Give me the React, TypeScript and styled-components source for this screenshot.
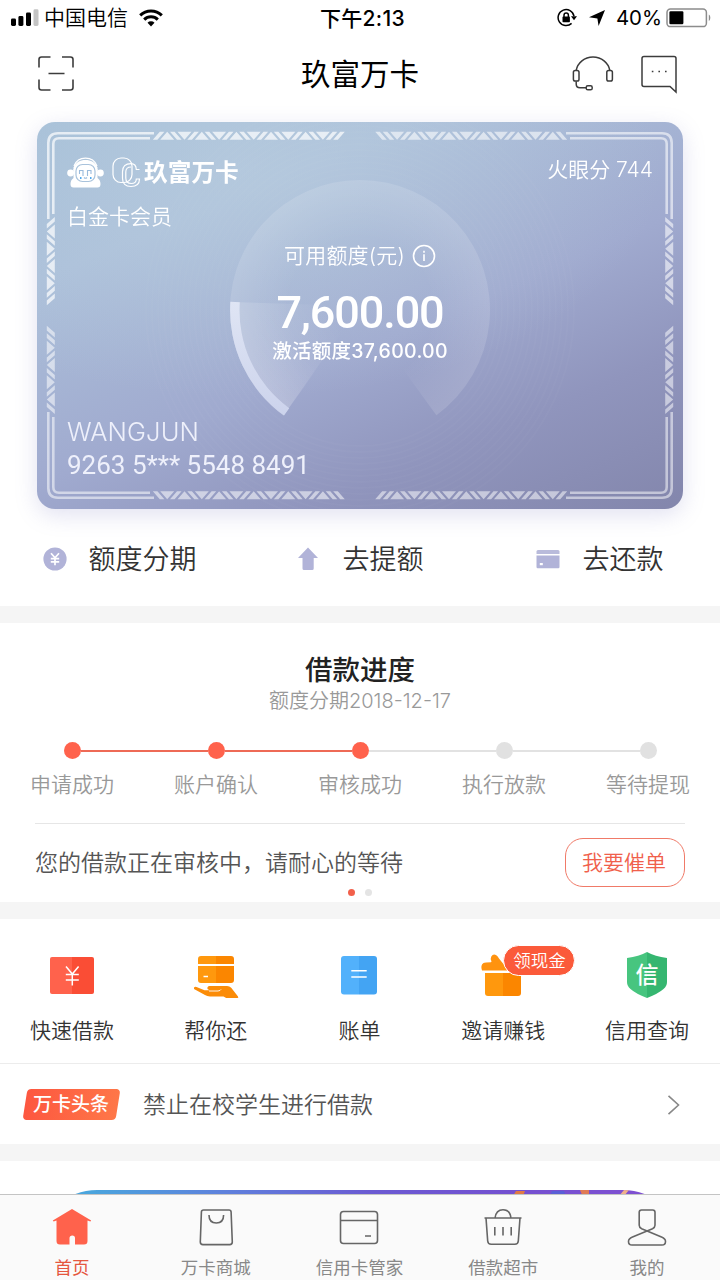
import React from "react";
import styled, { createGlobalStyle } from "styled-components";

const SANS = `Inter, "Noto Sans CJK SC", sans-serif`;
const DIN = `Roboto, "Noto Sans CJK SC", sans-serif`;
const ACCENT = "#ff624c";

const GlobalStyle = createGlobalStyle`
  * { box-sizing: border-box; }
  body { margin: 0; background: #fff; font-family: ${SANS}; }
  svg { display: block; flex: none; }
`;

const Screen = styled.div`
  width: 720px;
  height: 1280px;
  display: flex;
  flex-direction: column;
  overflow: hidden;
  background: #fff;
`;

const Label = styled.span<{
  $size: number;
  $color?: string;
  $weight?: number;
  $track?: number;
  $font?: string;
  $line?: number;
}>`
  font-family: ${(p) => p.$font ?? SANS};
  font-size: ${(p) => p.$size}px;
  line-height: ${(p) => p.$line ?? 28}px;
  color: ${(p) => p.$color ?? "#333"};
  font-weight: ${(p) => p.$weight ?? 400};
  letter-spacing: ${(p) => p.$track ?? 0}px;
  white-space: nowrap;
`;

/* ---------- status bar ---------- */

const StatusBar = styled.header`
  height: 36px;
  flex: none;
  display: grid;
  grid-template-columns: 1fr auto 1fr;
  align-items: center;
  padding: 0 9px 0 11px;
`;

const StatusSide = styled.div<{ $end?: boolean }>`
  display: flex;
  align-items: center;
  justify-content: ${(p) => (p.$end ? "flex-end" : "flex-start")};
`;

const Clock = styled.div`
  display: flex;
  padding: 1px 0 0 3px;
`;

const Gap = styled.i<{ $w: number }>`
  flex: none;
  width: ${(p) => p.$w}px;
`;

const SignalIcon = () => (
  <svg width="28" height="18" viewBox="11 9 28 18">
    <rect x="11" y="18.5" width="5" height="7.5" rx="1.4" />
    <rect x="18.4" y="16" width="5" height="10" rx="1.4" />
    <rect x="26" y="12.6" width="5" height="13.4" rx="1.4" />
    <rect x="33.5" y="9.3" width="5" height="16.7" rx="1.4" fill="#c4c4c4" />
  </svg>
);

const WifiIcon = () => (
  <svg width="24" height="18" viewBox="0 0 24 18" fill="none" stroke="#000" strokeWidth="3">
    <path d="M1.2 6.4a15.4 15.4 0 0 1 21.6 0" />
    <path d="M5.2 10.6a9.6 9.6 0 0 1 13.6 0" />
    <path d="M12 17.4l-3.5-3.6a5 5 0 0 1 7 0z" fill="#000" stroke="none" />
  </svg>
);

const LockIcon = () => (
  <svg width="20" height="20" viewBox="0 0 20 20" fill="none" stroke="#000" strokeWidth="1.5">
    <path d="M14.6 15.4A8 8 0 1 1 17 8.2" />
    <path d="M14 8.2h6l-3 4z" fill="#000" stroke="none" />
    <rect x="5.5" y="8.6" width="7.4" height="5.6" rx=".8" fill="#000" stroke="none" />
    <path d="M7 9V7.2a2.2 2.2 0 0 1 4.4 0V9" />
  </svg>
);

const LocationIcon = () => (
  <svg width="16" height="16" viewBox="0 0 16 16">
    <path d="M16 0L9.6 16 8.4 8.4 0 7.2z" />
  </svg>
);

const BatteryIcon = () => (
  <svg width="45" height="20" viewBox="0 0 45 20">
    <rect x="1" y="1" width="39.4" height="17.6" rx="3.4" fill="#fff" stroke="#8c8c8c" strokeWidth="1.5" />
    <rect x="3.4" y="3.3" width="14" height="13" rx="1.2" />
    <path d="M42.8 6.6c2 .8 2 5.600 0 6.400z" fill="#8c8c8c" />
  </svg>
);

/* ---------- title bar ---------- */

const TitleBar = styled.nav`
  height: 76px;
  flex: none;
  display: grid;
  grid-template-columns: 1fr auto 1fr;
  align-items: center;
  padding: 0 37px;
`;

const TitleActions = styled.div`
  display: flex;
  justify-content: flex-end;
  gap: 27px;
  padding-right: 5px;
`;

const ScanIcon = () => (
  <svg width="38" height="38" viewBox="0 0 38 38" fill="none" stroke="#3c3c3c" strokeWidth="1.6">
    <path d="M2 12.500V4.500a2.500 2.500 0 0 1 2.500-2.500h9M25 2h8.500A2.500 2.500 0 0 1 36 4.500v8M36 24.500v8a2.500 2.500 0 0 1-2.500 2.500H25M13.500 35h-9A2.500 2.500 0 0 1 2 32.500v-8M11.500 18.500h16" />
  </svg>
);

const HeadsetIcon = () => (
  <svg width="42" height="38" viewBox="572 55 42 38" fill="none" stroke="#3c3c3c" strokeWidth="1.5">
    <path d="M576.200 71.400a17 15.800 0 0 1 33.600 0" />
    <rect x="573.400" y="71.500" width="5.600" height="10.600" rx="1.800" />
    <rect x="606.800" y="71.500" width="5.600" height="10.600" rx="1.800" />
    <path d="M576.200 82.200v2.800q0 3.800 3.800 3.800h6" />
    <rect x="586.200" y="86.800" width="6" height="4" rx="1.600" />
  </svg>
);

const ChatIcon = () => (
  <svg width="37" height="40" viewBox="641 54 37 40" fill="none" stroke="#3c3c3c" strokeWidth="1.500">
    <path d="M644 56.500h30a2 2 0 0 1 2 2v33.600l-6-5.700h-26a2 2 0 0 1-2-2v-25.900a2 2 0 0 1 2-2z" />
    <path d="M651.800 71.500h1.600M658.400 71.500h1.600M665 71.500h1.600" />
  </svg>
);

/* ---------- membership card ---------- */

const CardArea = styled.section`
  flex: none;
  padding: 10px 37px 0;
`;

const Card = styled.div`
  position: relative;
  height: 387px;
  border-radius: 18px;
  overflow: hidden;
  background: radial-gradient(ellipse 420px 230px at 32% 12%, rgba(190, 210, 226, 0.5), rgba(190, 210, 226, 0) 100%),
    linear-gradient(157deg, #a3bdd6 0%, #abbfd9 24%, #a0aacf 55%, #9095bd 76%, #8386ac 100%);
`;

const CardShadow = styled.div`
  border-radius: 18px;
  box-shadow: 0 6px 22px rgba(120, 120, 190, 0.22);
`;

const CardArt = styled.svg`
  position: absolute;
  inset: 0;
`;

const CardBody = styled.div`
  position: relative;
  height: 100%;
  padding: 32px 30px 0;
  display: flex;
  flex-direction: column;
`;

const CardHeader = styled.div`
  height: 36px;
  display: flex;
  align-items: center;
`;

const BrandName = styled.div`
  display: flex;
  padding-top: 2px;
`;

const ScoreSlot = styled.div`
  margin-left: auto;
  padding-bottom: 4px;
`;

const CardRow = styled.div<{ $top: number; $height: number; $center?: boolean }>`
  margin-top: ${(p) => p.$top}px;
  height: ${(p) => p.$height}px;
  display: flex;
  align-items: center;
  justify-content: ${(p) => (p.$center ? "center" : "flex-start")};
`;

const BAR = 4.6;
const SLANT = 7;
const SPACE = 2.8;
const STRIDE = BAR + SLANT + SPACE * 2 + 0.1;

/* One braided strip, 8 units tall: triangles pointing up and down in turn,
   a slanted bar between each two, and a double bar at the far end. */
const Braid = ({ triangles }: { triangles: number }) => {
  const rising = (x: number) => `M${x} 8h${BAR}l${SLANT}-8h-${BAR}z`;
  const falling = (x: number) => `M${x} 0h${BAR}l${SLANT} 8h-${BAR}z`;
  const parts = [rising(0)];
  for (let i = 0; i < triangles; i++) {
    const left = BAR + SPACE + i * STRIDE;
    const after = left + SLANT + SPACE;
    if (i % 2 === 0) {
      parts.push(`M${left} 8l${SLANT}-8 ${SLANT} 8z`, falling(after));
    } else {
      parts.push(`M${left} 0l${SLANT} 8 ${SLANT}-8z`, rising(after));
    }
  }
  parts.push(rising(triangles * STRIDE + BAR + SPACE));
  return <path d={parts.join("")} />;
};

/* A quarter of the card frame; mirrored for the other three corners. */
const FrameQuarter = ({ transform, opacity }: { transform: string; opacity: number }) => (
  <g transform={transform} opacity={opacity}>
    <g fill="none" stroke="#fff">
      <path d="M11.300 97V21q0-9.700 9.700-9.700h96" strokeWidth="2.600" />
      <path d="M16.300 92V22q0-5.700 5.700-5.700h91" strokeWidth="2.600" />
    </g>
    <g fill="#fff">
      <g transform="translate(115.800 9.800)">
        <Braid triangles={10} />
      </g>
      <g transform="translate(9.800 95) matrix(0 1 1 0 0 0)">
        <Braid triangles={4} />
      </g>
    </g>
  </g>
);

const ripples = Array.from({ length: 14 }, (_, i) => 136 + i * 6);

const CardBackground = () => (
  <CardArt width="646" height="387" viewBox="0 0 646 387">
    <defs>
      <radialGradient id="discFade" gradientUnits="userSpaceOnUse" cx="323" cy="188" r="130">
        <stop offset=".55" stopColor="#fff" stopOpacity="0" />
        <stop offset="1" stopColor="#fff" stopOpacity=".13" />
      </radialGradient>
      <linearGradient id="wedge" gradientUnits="userSpaceOnUse" x1="200" y1="240" x2="300" y2="195">
        <stop offset="0" stopColor="#fff" stopOpacity=".2" />
        <stop offset="1" stopColor="#fff" stopOpacity="0" />
      </linearGradient>
      <linearGradient id="ring" x1="0" y1="0" x2="0" y2="1">
        <stop offset="0" stopColor="#dfe5f4" />
        <stop offset="1" stopColor="#ccd3ec" />
      </linearGradient>
    </defs>
    <g fill="none" stroke="#fff" strokeOpacity=".025" strokeWidth="2">
      {ripples.map((r) => (
        <circle key={r} cx="323" cy="188" r={r} />
      ))}
    </g>
    <path d="M323 188L246.600 293.200A130 130 0 1 1 399.400 293.200z" fill="url(#discFade)" />
    <path d="M323 184L193.400 180A130 130 0 0 0 246.600 293.500z" fill="url(#wedge)" />
    <path d="M193.400 179.800A130 130 0 0 0 247 293.600L252.200 286.200A121 121 0 0 1 202.800 180.300z" fill="url(#ring)" />
    <FrameQuarter transform="" opacity={0.7} />
    <FrameQuarter transform="translate(646 0) scale(-1 1)" opacity={0.58} />
    <FrameQuarter transform="translate(0 387) scale(1 -1)" opacity={0.54} />
    <FrameQuarter transform="translate(646 387) scale(-1 -1)" opacity={0.52} />
  </CardArt>
);

const MascotIcon = () => (
  <svg width="37" height="31" viewBox="0 0 37 31">
    <path d="M7 9C9 4 13 1.200 18.500 1.200S28 4 30 9" fill="none" stroke="#fff" strokeWidth="1.300" />
    <path d="M6.500 10.500C9 5 13 3 18.500 3S28 5 30.500 10.500V16H6.500z" fill="#fff" />
    <circle cx="3.600" cy="16" r="3.400" fill="#fff" />
    <circle cx="33.400" cy="16" r="3.400" fill="#fff" />
    <path d="M6.500 12h24v9q3 2 3 6 0 3.500-3 3.500h-24q-3 0-3-3.500 0-4 3-6z" fill="#fff" />
    <rect x="9" y="7.500" width="19" height="17" rx="6.500" fill="#fff" stroke="#a9c3dc" strokeWidth="1.200" />
    <path d="M12.500 17v-3.500h3.500V19M20.500 19v-5.500H24V17M17 20.500q1.500 1.500 3 0" fill="none" stroke="#9bbbdc" strokeWidth="1.100" />
    <path d="M13 21h1.500M23 21h1.500" stroke="#4fa8ee" strokeWidth="1.800" />
  </svg>
);

const BrandMark = () => (
  <svg width="29" height="31" viewBox="0 0 29 31" fill="none" stroke="#fff" strokeWidth="1.200">
    <rect x="1" y="1" width="19" height="24.500" rx="8" />
    <path d="M27.500 12.500h-3.200q-.3-5.800-5.300-5.800-8.500 0-8.500 8v6.500q0 8.300 8.500 8.300 8.500 0 8.500-7.500h-3.200q0 4.500-5 4.500-5.500 0-5.500-5.500v-6q0-5 5.200-5" />
  </svg>
);

const InfoIcon = () => (
  <svg width="24" height="24" viewBox="0 0 24 24" fill="none" stroke="#fff" strokeWidth="1.600">
    <circle cx="12" cy="12" r="10.500" />
    <path d="M12 10.300v6.700M12 6.800v1.900" />
  </svg>
);

/* ---------- quick actions ---------- */

const QuickRow = styled.div`
  height: 97px;
  flex: none;
  display: flex;
  align-items: center;
  padding: 3px 0 0 42.500px;
`;

const QuickItem = styled.div<{ $gap: number; $before?: number }>`
  display: flex;
  align-items: center;
  gap: ${(p) => p.$gap}px;
  margin-left: ${(p) => p.$before ?? 0}px;
  & > span { padding-top: 2px; }
`;

const CoinIcon = () => (
  <svg width="24" height="24" viewBox="0 0 24 24">
    <circle cx="12" cy="12" r="11.600" fill="#b1b3d8" />
    <path d="M8 6.200l4 4.600 4-4.600M12 10.800v7.400M7.800 11.600h8.400M7.800 14.800h8.400" fill="none" stroke="#fff" strokeWidth="1.700" />
  </svg>
);

const UpIcon = () => (
  <svg width="20" height="24" viewBox="0 0 20 24">
    <path d="M10 .5L20 11h-4.300v10.500q0 1.500-1.500 1.500H6q-1.500 0-1.500-1.500V11H0z" fill="#b1b3d8" />
  </svg>
);

const PayCardIcon = () => (
  <svg width="24" height="20" viewBox="0 0 24 20">
    <path d="M2 1h20q1.500 0 1.500 1.500V5H.5V2.500Q.5 1 2 1z" fill="#b9bbdb" />
    <path d="M.5 6.600h23V18q0 1.200-1.200 1.200H1.700Q.5 19.200.5 18z" fill="#b1b3d8" />
    <rect x="3.800" y="14" width="3" height="2.200" fill="#fff" />
  </svg>
);

const Band = styled.div<{ $h: number }>`
  height: ${(p) => p.$h}px;
  flex: none;
  background: #f5f5f5;
`;

/* ---------- loan progress ---------- */

const Progress = styled.section`
  height: 279px;
  flex: none;
  display: flex;
  flex-direction: column;
  align-items: center;
  padding-top: 31px;
`;

const Steps = styled.div`
  width: 720px;
  margin-top: 26px;
  display: grid;
  grid-template-columns: repeat(5, 144px);
`;

const Step = styled.div`
  display: flex;
  flex-direction: column;
  align-items: center;
  gap: 12px;
`;

const Track = styled.div`
  width: 100%;
  display: flex;
  align-items: center;
`;

const Rail = styled.i<{ $tone: "on" | "off" | "none" }>`
  flex: 1;
  height: 2px;
  background: ${(p) => (p.$tone === "on" ? "#ee6a56" : p.$tone === "off" ? "#e2e2e2" : "transparent")};
`;

const Dot = styled.i<{ $on: boolean }>`
  width: 17px;
  height: 17px;
  border-radius: 50%;
  background: ${(p) => (p.$on ? ACCENT : "#e1e1e1")};
`;

const Notice = styled.div`
  width: 650px;
  height: 64px;
  margin-top: 24px;
  padding-top: 14px;
  border-top: 1px solid #e6e6e6;
  display: flex;
  align-items: center;
  justify-content: space-between;
`;

const UrgeButton = styled.button`
  width: 120px;
  height: 49px;
  padding: 0 2px 0 0;
  background: #fff;
  border: 1.500px solid #f07a68;
  border-radius: 18px;
`;

const Pager = styled.div`
  display: flex;
  align-items: center;
  gap: 10px;
  margin-top: 2px;
`;

const PagerDot = styled.i<{ $on?: boolean }>`
  width: 7px;
  height: 7px;
  border-radius: 50%;
  background: ${(p) => (p.$on ? "#f2604b" : "#e4e4e4")};
`;

/* ---------- service menu ---------- */

const Menu = styled.section`
  height: 145px;
  flex: none;
  display: grid;
  grid-template-columns: repeat(5, 143.800px);
  padding-top: 32px;
  border-bottom: 1px solid #ececec;
`;

const MenuItem = styled.div`
  position: relative;
  display: flex;
  flex-direction: column;
  align-items: center;
  gap: 18px;
`;

const Badge = styled.span`
  position: absolute;
  top: -6px;
  left: 72px;
  width: 72px;
  height: 31px;
  display: flex;
  align-items: center;
  justify-content: center;
  border: 1.500px solid #fff;
  border-radius: 16px;
  background: #fb5a3a;
`;

const ShieldIcon = styled.div`
  position: relative;
  width: 50px;
  height: 48px;
  display: flex;
  align-items: center;
  justify-content: center;
  & > svg { position: absolute; inset: 0; }
  & > span { position: relative; }
`;

const LoanIcon = () => (
  <svg width="50" height="48" viewBox="47 951 50 48">
    <path d="M52 957h20v37H52a2 2 0 0 1-2-2v-33a2 2 0 0 1 2-2z" fill="#ff624c" />
    <path d="M72 957h20a2 2 0 0 1 2 2v33a2 2 0 0 1-2 2H72z" fill="#fa4d35" />
    <path d="M66 966.500l6.300 7.500 6.300-7.500M72.300 974v11.500M65.800 974.600h13M65.800 980h13" fill="none" stroke="#fff" strokeWidth="1.500" />
  </svg>
);

const RepayIcon = () => (
  <svg width="50" height="48" viewBox="191 951 50 48">
    <path d="M216 956h-15a3 3 0 0 0-3 3v5h18zM198 966v14a3 3 0 0 0 3 3h15v-17z" fill="#ff980d" />
    <path d="M216 956h15a3 3 0 0 1 3 3v5h-18zM234 966v14a3 3 0 0 1-3 3h-15v-17z" fill="#fb8600" />
    <path d="M203.500 976.500h4.500" stroke="#fff" strokeWidth="1.500" />
    <path d="M194 989q-.5-2.800 2.500-2l8 3.300h5l-2-1.400q-.6-2.400 2-2.900h17.500q2.600 0 4.200 1.800l6.800 8.700q1 1.500-.8 1.500h-11l-2.700-1.600h-13.500q-3 0-5-1.400z" fill="#fb8c08" />
    <path d="M209 991h9q2.500-.3 3-1.600" fill="none" stroke="#fff" strokeWidth=".9" />
  </svg>
);

const BillIcon = () => (
  <svg width="50" height="48" viewBox="335 951 50 48">
    <path d="M360 956h-15a3 3 0 0 0-3 3v32.500a3 3 0 0 0 3 3h15z" fill="#52b1fb" />
    <path d="M360 956h15a3 3 0 0 1 3 3v32.500a3 3 0 0 1-3 3h-15z" fill="#43a4f3" />
    <path d="M352.300 970.700h15.400M352.300 976.900h15.400" stroke="#fff" strokeWidth="1.500" />
  </svg>
);

const GiftIcon = () => (
  <svg width="50" height="48" viewBox="479 951 50 48">
    <path d="M486 973h18v23h-15a3 3 0 0 1-3-3z" fill="#ff980d" />
    <path d="M504 973h18v20a3 3 0 0 1-3 3h-15z" fill="#fb8600" />
    <path d="M483 970.500q-1.800-5.500 1.500-7.500 1.500-.8 7.500-.8l.5-.8q-1.500-2.400-.2-4.800 1.800-3.200 5-1.400 1.400 1 2.700 3.300l6 7.500 4 4.500z" fill="#ff930f" />
  </svg>
);

/* ---------- headline ---------- */

const Headline = styled.section`
  height: 80px;
  flex: none;
  display: flex;
  align-items: center;
  padding: 1px 40px 0 25px;
`;

const Tag = styled.span`
  width: 93px;
  height: 31px;
  margin-right: 25px;
  display: flex;
  align-items: center;
  justify-content: center;
  background: linear-gradient(90deg, #fd5740, #fe7748);
  border-radius: 4px;
  transform: skewX(-9deg);
  & > span { transform: skewX(9deg); }
`;

const ChevronSlot = styled.div`
  margin-left: auto;
`;

/* ---------- banner + tab bar ---------- */

const BannerArea = styled.section`
  flex: 1;
  min-height: 0;
  overflow: hidden;
  padding: 29px 37px 0;
`;

const Banner = styled.div`
  height: 160px;
  border-radius: 60px;
  overflow: hidden;
  background: linear-gradient(90deg, #4aa5dd 8%, #5f7fdc 30%, #6b5ad2 52%, #7450d0 75%, #8350d2 100%);
`;

const TabBar = styled.footer`
  height: 86px;
  flex: none;
  display: grid;
  grid-template-columns: repeat(5, 143.800px);
  border-top: 1px solid #c4c4c4;
  background: #fafafa;
`;

const Tab = styled.div`
  display: flex;
  flex-direction: column;
  align-items: center;
  padding-top: 12px;
  gap: 7px;
`;

const TabIcon = ({ children }: { children: React.ReactNode }) => (
  <svg width="40" height="40" viewBox="0 0 40 40" fill="none" stroke="#666" strokeWidth="1.600" strokeLinejoin="round">
    {children}
  </svg>
);

const steps = ["申请成功", "账户确认", "审核成功", "执行放款", "等待提现"];

const railTone = (index: number) => (index < 0 || index > 3 ? "none" : index < 2 ? "on" : "off");

export default function App() {
  return (
    <Screen>
      <GlobalStyle />
      <StatusBar>
        <StatusSide>
          <SignalIcon />
          <Gap $w={5} />
          <Label $size={21} $color="#000" $weight={350}>中国电信</Label>
          <Gap $w={11} />
          <WifiIcon />
        </StatusSide>
        <Clock>
          <Label $size={21} $color="#000" $weight={500} $track={0.3}>下午2:13</Label>
        </Clock>
        <StatusSide $end>
          <LockIcon />
          <Gap $w={12} />
          <LocationIcon />
          <Gap $w={11} />
          <Label $size={20.4} $color="#000">40%</Label>
          <Gap $w={4} />
          <BatteryIcon />
        </StatusSide>
      </StatusBar>

      <TitleBar>
        <ScanIcon />
        <Label $size={29.5} $color="#000" $line={40}>玖富万卡</Label>
        <TitleActions>
          <HeadsetIcon />
          <ChatIcon />
        </TitleActions>
      </TitleBar>

      <CardArea>
        <CardShadow>
          <Card>
            <CardBackground />
            <CardBody>
              <CardHeader>
                <MascotIcon />
                <Gap $w={8} />
                <BrandMark />
                <Gap $w={3} />
                <BrandName>
                  <Label $size={23.7} $color="#fff" $weight={700}>玖富万卡</Label>
                </BrandName>
                <ScoreSlot>
                  <Label $size={21} $color="#fff" $weight={350}>火眼分 744</Label>
                </ScoreSlot>
              </CardHeader>
              <CardRow $top={13} $height={28}>
                <Label $size={21} $color="#fff" $weight={350}>白金卡会员</Label>
              </CardRow>
              <CardRow $top={11} $height={28} $center>
                <Label $size={21} $color="#fff" $weight={350} $track={0.2}>可用额度(元)</Label>
                <Gap $w={7} />
                <InfoIcon />
              </CardRow>
              <CardRow $top={18} $height={50} $center>
                <Label $size={45} $color="#fff" $weight={500} $track={-1.1} $font={DIN} $line={50}>7,600.00</Label>
              </CardRow>
              <CardRow $top={1} $height={24} $center>
                <Label $size={19.500} $color="#fff" $weight={500} $track={0.3}>激活额度37,600.00</Label>
              </CardRow>
              <CardRow $top={55} $height={28}>
                <Label $size={25.500} $color="#eef0fb" $weight={350} $track={0.1}>WANGJUN</Label>
              </CardRow>
              <CardRow $top={5} $height={28}>
                <Label $size={26} $color="#eef0fb" $font={DIN}>9263 5*** 5548 8491</Label>
              </CardRow>
            </CardBody>
          </Card>
        </CardShadow>
      </CardArea>

      <QuickRow>
        <QuickItem $gap={22}>
          <CoinIcon />
          <Label $size={27} $weight={350} $line={36}>额度分期</Label>
        </QuickItem>
        <QuickItem $gap={25} $before={101}>
          <UpIcon />
          <Label $size={27} $weight={350} $line={36}>去提额</Label>
        </QuickItem>
        <QuickItem $gap={23} $before={112}>
          <PayCardIcon />
          <Label $size={27} $weight={350} $line={36}>去还款</Label>
        </QuickItem>
      </QuickRow>
      <Band $h={17} />

      <Progress>
        <Label $size={27.500} $color="#222" $weight={500} $line={32}>借款进度</Label>
        <Label $size={20} $color="#999" $weight={350} $line={30}>额度分期2018-12-17</Label>
        <Steps>
          {steps.map((name, i) => (
            <Step key={name}>
              <Track>
                <Rail $tone={railTone(i - 1)} />
                <Dot $on={i < 3} />
                <Rail $tone={railTone(i)} />
              </Track>
              <Label $size={21} $color="#999" $weight={350}>{name}</Label>
            </Step>
          ))}
        </Steps>
        <Notice>
          <Label $size={23} $color="#555" $weight={350}>您的借款正在审核中，请耐心的等待</Label>
          <UrgeButton>
            <Label $size={21} $color="#f0604b" $weight={350}>我要催单</Label>
          </UrgeButton>
        </Notice>
        <Pager>
          <PagerDot $on />
          <PagerDot />
        </Pager>
      </Progress>
      <Band $h={17} />

      <Menu>
        <MenuItem>
          <LoanIcon />
          <Label $size={21} $weight={350}>快速借款</Label>
        </MenuItem>
        <MenuItem>
          <RepayIcon />
          <Label $size={21} $weight={350}>帮你还</Label>
        </MenuItem>
        <MenuItem>
          <BillIcon />
          <Label $size={21} $weight={350}>账单</Label>
        </MenuItem>
        <MenuItem>
          <GiftIcon />
          <Badge>
            <Label $size={17.500} $color="#fff" $weight={350}>领现金</Label>
          </Badge>
          <Label $size={21} $weight={350}>邀请赚钱</Label>
        </MenuItem>
        <MenuItem>
          <ShieldIcon>
            <svg width="50" height="48" viewBox="623 951 50 48">
              <path d="M648 952q-8 4.500-20 6v24q0 4 3.500 7 5 4.500 16.500 9z" fill="#47c57f" />
              <path d="M648 952q8 4.500 20 6v24q0 4-3.500 7-5 4.500-16.500 9z" fill="#35b670" />
            </svg>
            <Label $size={23} $color="#fff" $weight={500}>信</Label>
          </ShieldIcon>
          <Label $size={21} $weight={350}>信用查询</Label>
        </MenuItem>
      </Menu>

      <Headline>
        <Tag>
          <Label $size={19} $color="#fff" $weight={500}>万卡头条</Label>
        </Tag>
        <Label $size={23} $color="#555" $weight={350}>禁止在校学生进行借款</Label>
        <ChevronSlot>
          <svg width="13" height="20" viewBox="0 0 13 20" fill="none" stroke="#888" strokeWidth="1.600">
            <path d="M1.500 .8l10 9.200-10 9.200" />
          </svg>
        </ChevronSlot>
      </Headline>
      <Band $h={17} />

      <BannerArea>
        <Banner>
          <svg width="646" height="6" viewBox="37 1190 646 6">
            <path d="M513 1196l3-5h9l-2 5z" fill="#e07a45" />
            <path d="M550 1196l2-5h12l2 5z" fill="#5a5fd6" />
            <path d="M580 1190l9 0 0 5-7 0z" fill="#e07a55" />
            <path d="M619 1196l5-6h5l-5 6z" fill="#f0b08a" />
          </svg>
        </Banner>
      </BannerArea>

      <TabBar>
        <Tab>
          <svg width="40" height="40" viewBox="0 0 40 40">
            <path d="M20 2L39.200 13.600 38.400 14.600 35.500 13.500V34q0 3.500-3.500 3.500h-9V31q0-2.500-2.700-2.500T17.500 31v6.500H8q-3.500 0-3.500-3.500V13.500L1.600 14.600 .8 13.600z" fill={ACCENT} />
          </svg>
          <Label $size={17.500} $color="#e5573f">首页</Label>
        </Tab>
        <Tab>
          <TabIcon>
            <path d="M7.500 3h25.500q2 0 2.100 2l1.200 30q0 2.600-2.600 2.600H6.900q-2.600 0-2.600-2.600l1.100-30q.1-2 2.100-2z" />
            <path d="M13 8q0 8 7.300 8t7.300-8" />
          </TabIcon>
          <Label $size={17.500} $color="#888">万卡商城</Label>
        </Tab>
        <Tab>
          <TabIcon>
            <rect x="1.500" y="4.500" width="37" height="32" rx="3" />
            <path d="M1.500 13.500h37M26 29h6" />
          </TabIcon>
          <Label $size={17.500} $color="#888">信用卡管家</Label>
        </Tab>
        <Tab>
          <TabIcon>
            <path d="M1.500 11h37M3 11l1.700 23q.3 3.300 3.500 3.300h23.600q3.200 0 3.500-3.300L37 11M12 11q1-8.300 8-8.300T28 11M11.800 20v8.500M20 20v8.500M28.200 20v8.500" />
          </TabIcon>
          <Label $size={17.500} $color="#888">借款超市</Label>
        </Tab>
        <Tab>
          <TabIcon>
            <path d="M14.500 3h11.200q2.300 0 2.300 2.300v13q0 2.300-2.500 3.500L5.500 30q-4 1.700-4 4.400Q1.500 38 5 38h30q3.500 0 3.500-3.600 0-2.700-4-4.400L14.700 21.800q-2.500-1.200-2.500-3.500v-13Q12.200 3 14.500 3z" />
          </TabIcon>
          <Label $size={17.500} $color="#888">我的</Label>
        </Tab>
      </TabBar>
    </Screen>
  );
}
